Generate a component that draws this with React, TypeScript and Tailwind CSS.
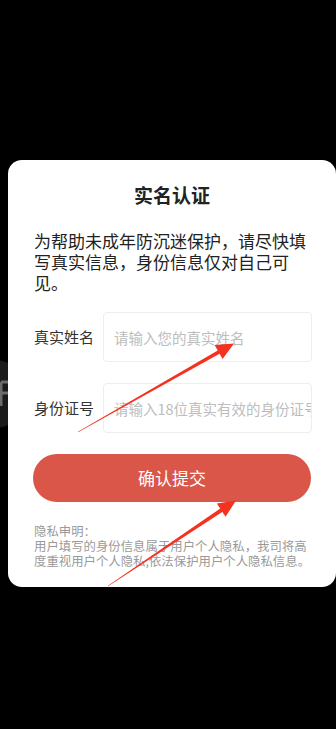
export default function App() {
  const font = { fontFamily: '"Noto Sans CJK SC", "Noto Sans", sans-serif' };
  return (
    <div className="relative w-[336px] h-[729px] bg-black overflow-hidden" style={font}>
      {/* faint floating button behind the dialog */}
      <div className="absolute left-[-40px] top-[360px] w-[68px] h-[68px] rounded-full bg-[#1b1b1b]">
        <svg className="absolute left-[38px] top-[20px]" width="16" height="28" viewBox="0 0 16 28">
          <path d="M3 2 V26 M3 2 H14 M3 13 H12" stroke="#6b6b6b" strokeWidth="3" fill="none" />
        </svg>
      </div>

      <div className="relative pt-[160px] pl-[8px]">
        <div className="w-[328px] bg-white rounded-[14px] pt-[21px] pb-[18px]">
          <h1 className="text-center text-[19px] leading-[27px] font-bold text-[#222]">实名认证</h1>

          <p className="mt-[22px] px-[26px] text-[17px] leading-[21px] text-[#222]">
            为帮助未成年防沉迷保护，请尽快填写真实信息，身份信息仅对自己可见。
          </p>

          <div className="mt-[19px] flex flex-col gap-[21px] pl-[26px] pr-[24px]">
            <div className="flex items-center">
              <span className="w-[69px] shrink-0 text-[15px] text-[#333]">真实姓名</span>
              <input
                className="flex-1 min-w-0 h-[50px] border border-[#eeeeee] rounded-[4px] pl-[10px] text-[14.5px] outline-none placeholder:text-[#bdbdbd]"
                placeholder="请输入您的真实姓名"
              />
            </div>
            <div className="flex items-center">
              <span className="w-[69px] shrink-0 text-[15px] text-[#333]">身份证号</span>
              <input
                className="flex-1 min-w-0 h-[50px] border border-[#eeeeee] rounded-[4px] pl-[10px] text-[14.5px] outline-none placeholder:text-[#bdbdbd]"
                placeholder="请输入18位真实有效的身份证号"
              />
            </div>
          </div>

          <div className="mt-[21px] pl-[25px] pr-[25px]">
            <button className="w-full h-[48px] rounded-full bg-[#d95648] text-white text-[17px]">确认提交</button>
          </div>

          <div className="mt-[22px] pl-[26px] pr-[20px] text-[12.4px] leading-[15px] text-[#9a9a9a]">
            <p>隐私申明：</p>
            <p>用户填写的身份信息属于用户个人隐私，我司将高度重视用户个人隐私,依法保护用户个人隐私信息。</p>
          </div>
        </div>
      </div>

      {/* red annotation arrows */}
      <svg className="absolute left-0 top-0 pointer-events-none" width="336" height="729">
        <polygon points="78.1,432.2 77.9,431.8 221.6,348.2 223.6,351.6" fill="#f5321f" />
        <polygon points="234,343.5 222.6,359.0 214.6,345.0" fill="#f5321f" />
        <polygon points="108.1,586.2 107.9,585.8 223.9,506.0 226.1,509.4" fill="#f5321f" />
        <polygon points="236,500.5 225.6,516.7 216.8,503.6" fill="#f5321f" />
      </svg>
    </div>
  );
}
